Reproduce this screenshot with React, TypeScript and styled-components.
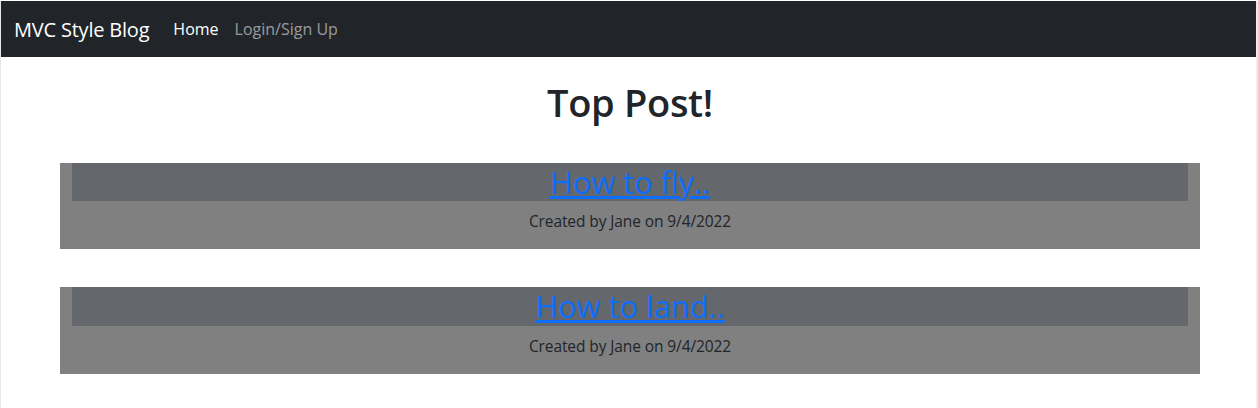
import { createGlobalStyle } from 'styled-components'
import styled from 'styled-components'

const posts = [
  { id: 1, title: 'How to fly..', author: 'Jane', date: '9/4/2022' },
  { id: 2, title: 'How to land..', author: 'Jane', date: '9/4/2022' }
]

const GlobalStyle = createGlobalStyle`
  body {
    margin: 0;
    background: #ffffff;
    color: #212529;
    font-family: "Open Sans", "Noto Sans", sans-serif;
  }
`

export default function App() {
  return (
    <>
      <GlobalStyle />
      <Page>
        <Navbar>
          <Brand>MVC Style Blog</Brand>
          <NavLinks>
            <NavLink $active>Home</NavLink>
            <NavLink>Login/Sign Up</NavLink>
          </NavLinks>
        </Navbar>

        <Main>
          <Title>Top Post!</Title>

          <PostList>
            {posts.map(post => (
              <PostCard key={post.id}>
                <PostHeader>
                  <PostLink href="#">{post.title}</PostLink>
                </PostHeader>
                <PostMeta>
                  Created by {post.author} on {post.date}
                </PostMeta>
              </PostCard>
            ))}
          </PostList>
        </Main>
      </Page>
    </>
  )
}

const Page = styled.div`
  min-height: 408px;
  box-sizing: border-box;
  border-left: 1px solid #e6e6e6;
  border-right: 2px solid #ececec;
`

const Navbar = styled.nav`
  display: flex;
  align-items: center;
  height: 56px;
  margin-top: 1px;
  padding: 0 13px;
  background-color: #212529;
`

const Brand = styled.span`
  color: #ffffff;
  font-size: 20px;
  letter-spacing: -0.2px;
  margin-right: 24px;
`

const NavLinks = styled.div`
  display: flex;
  gap: 16px;
`

const NavLink = styled.span<{ $active?: boolean }>`
  color: ${p => (p.$active ? '#ffffff' : 'rgba(255, 255, 255, 0.55)')};
  font-size: 16px;
`

const Main = styled.main`
  display: flex;
  flex-direction: column;
  align-items: center;
  padding-left: 3px;
`

const Title = styled.h1`
  margin: 23px 0 37px;
  font-size: 38px;
  font-weight: 600;
  line-height: 1.2;
  letter-spacing: -0.3px;
`

const PostList = styled.div`
  display: flex;
  flex-direction: column;
  gap: 38px;
  width: 1140px;
`

const PostCard = styled.section`
  background-color: #808080;
  padding: 0 12px;
  text-align: center;
`

const PostHeader = styled.h2`
  margin: 0;
  background-color: #64676b;
  font-size: 31px;
  font-weight: 500;
  line-height: 38.5px;
  letter-spacing: -0.1px;
`

const PostLink = styled.a`
  color: #0d6efd;
  text-decoration: underline;
`

const PostMeta = styled.p`
  margin: 8px 0 0;
  padding-bottom: 16px;
  font-size: 15.5px;
  line-height: 24px;
  color: #212529;
  letter-spacing: -0.1px;
`
